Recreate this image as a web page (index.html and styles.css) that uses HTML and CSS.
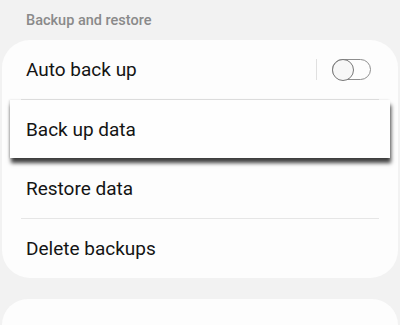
FILE: index.html
```html
<!DOCTYPE html>
<html lang="en">
<head>
    <meta charset="UTF-8">
    <title>Backup and restore</title>
    <link rel="stylesheet" href="styles.css">
</head>
<body>
    <div class="section-title">Backup and restore</div>

    <div class="card">
        <div class="row">
            <span class="label">Auto back up</span>
            <span class="sep"></span>
            <span class="switch"><span class="knob"></span></span>
        </div>
        <div class="divider"></div>
        <div class="row lifted">
            <span class="label">Back up data</span>
        </div>
        <div class="row">
            <span class="label">Restore data</span>
        </div>
        <div class="divider"></div>
        <div class="row">
            <span class="label">Delete backups</span>
        </div>
    </div>

    <div class="card next"></div>
</body>
</html>
```

FILE: styles.css
```css
body {
    margin: 0;
    background: #f2f2f2;
    font-family: Roboto, "Noto Sans", sans-serif;
    color: #141414;
    overflow: hidden;
}
.section-title {
    padding: 12px 26px 0;
    height: 28px;
    font-size: 14.5px;
    font-weight: 500;
    color: #8a8a8a;
}
.card {
    background: #fdfdfd;
    margin: 0 2px;
    border-radius: 28px;
    display: flex;
    flex-direction: column;
}
.card.next {
    margin-top: 21px;
    height: 26px;
    border-radius: 28px 28px 0 0;
}
.row {
    height: 59px;
    padding: 0 24px;
    display: flex;
    align-items: center;
}
.label {
    font-size: 19px;
    flex: 1;
}
.lifted {
    height: 58px;
    margin: 0 8px 1px;
    padding: 0 16px;
    background: #fefefe;
    box-shadow: 1px 5px 4px rgba(0,0,0,0.75), -1px 0 2px rgba(0,0,0,0.12);
}
.divider {
    height: 1px;
    background: #e6e6e6;
    margin: 0 19px;
}
.sep {
    width: 1px;
    height: 21px;
    background: #e0e0e0;
    margin-right: 15px;
}
.switch {
    position: relative;
    width: 37px;
    height: 19px;
    border: 1.5px solid #8e8e8e;
    border-radius: 12px;
    margin-right: 3px;
}
.knob {
    position: absolute;
    left: -1.5px;
    top: -1.5px;
    width: 20px;
    height: 20px;
    border: 1.5px solid #777;
    border-radius: 50%;
    background: #f7f7f7;
}
```
